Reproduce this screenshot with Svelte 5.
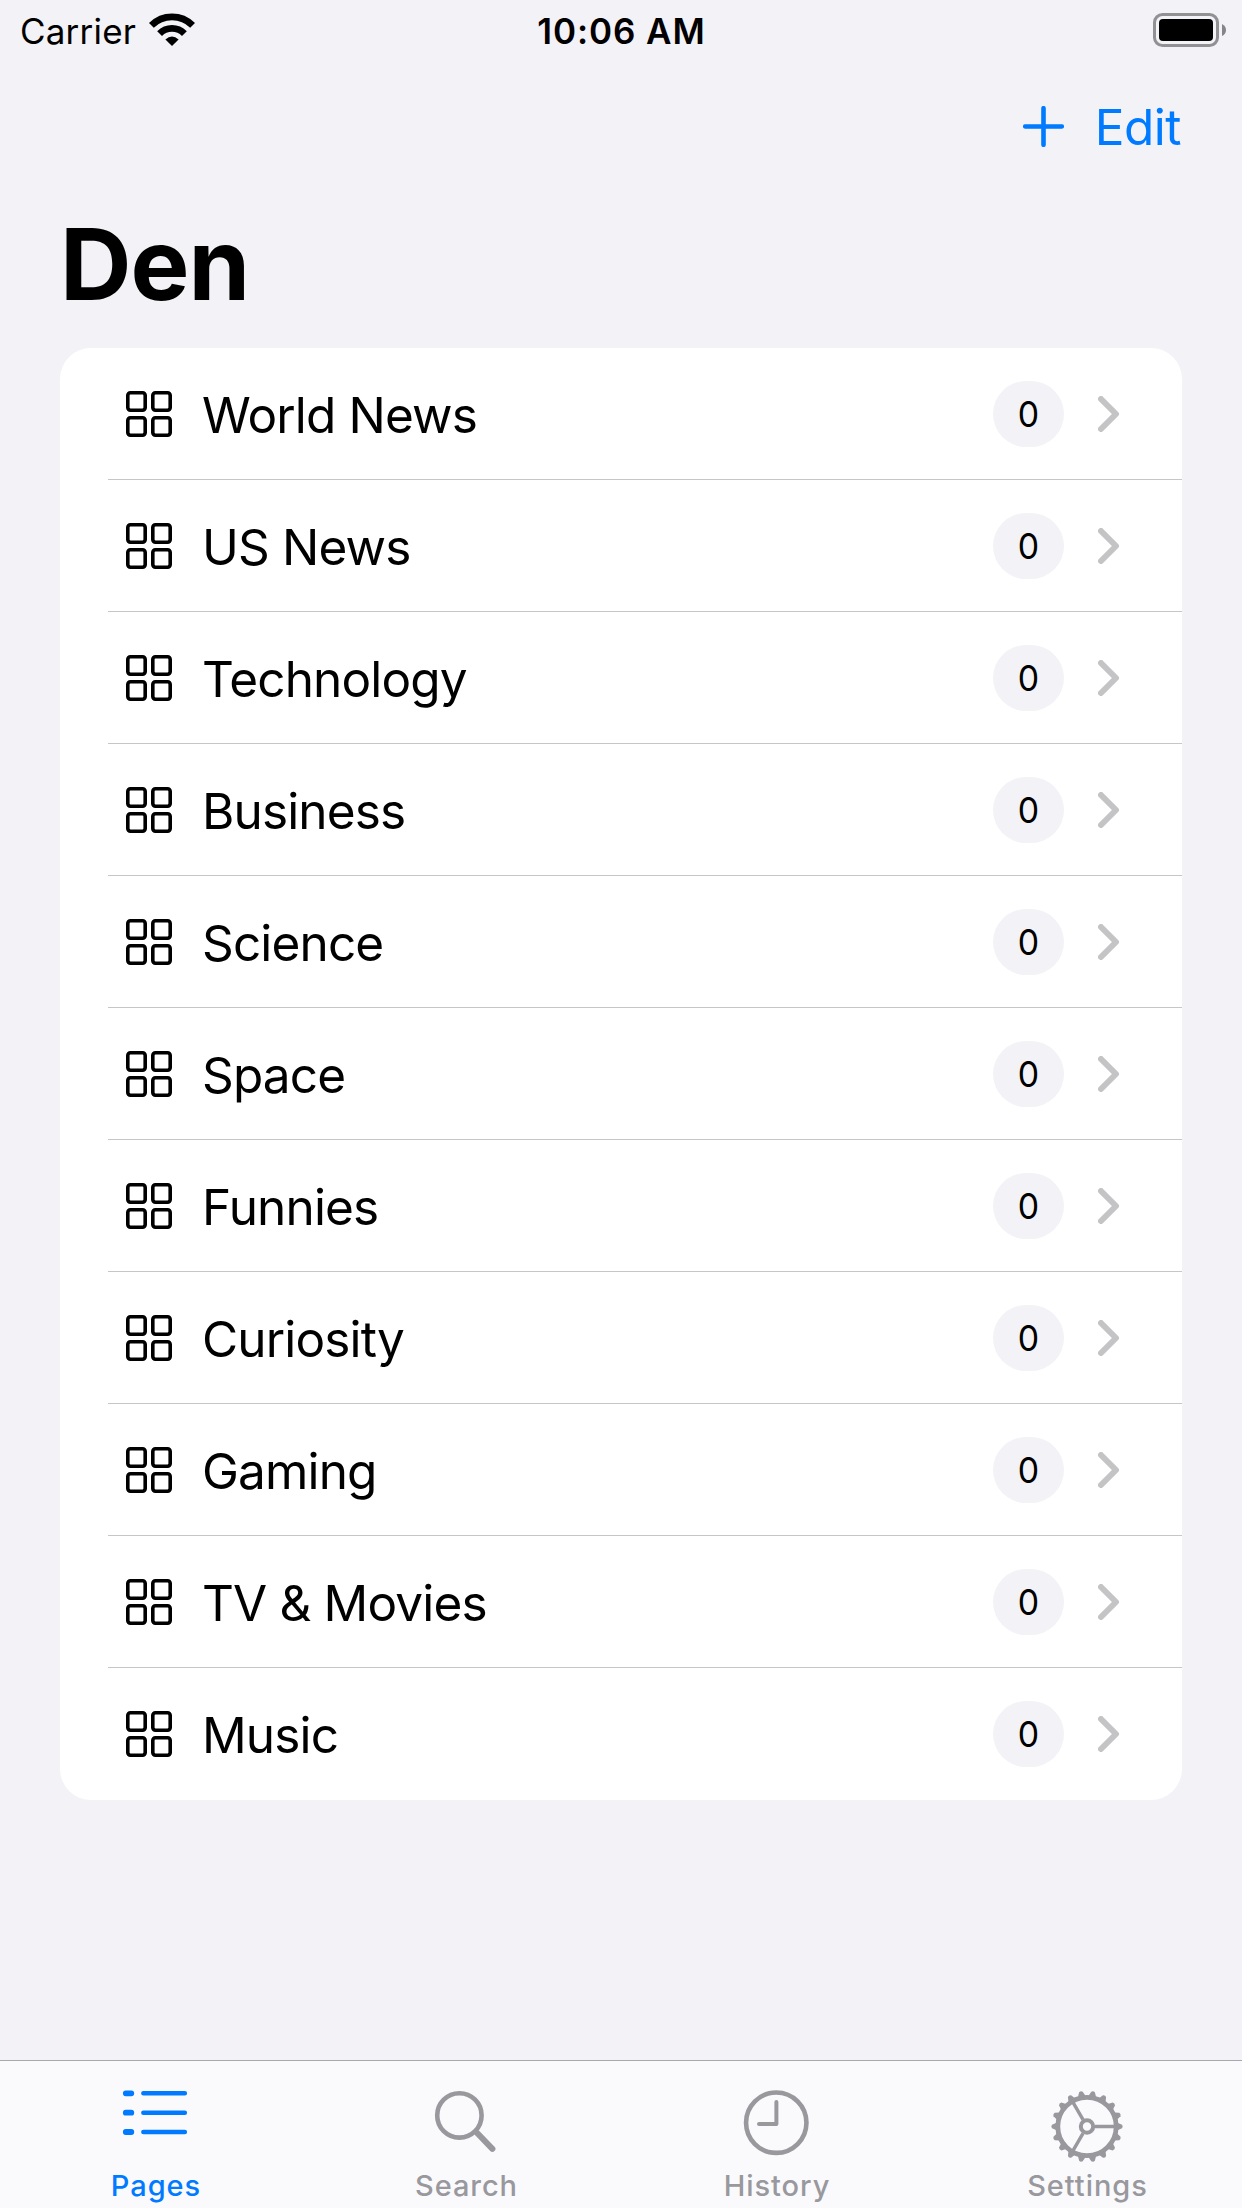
<script>
  const pages = [
    'World News', 'US News', 'Technology', 'Business', 'Science', 'Space',
    'Funnies', 'Curiosity', 'Gaming', 'TV & Movies', 'Music'
  ].map((name) => ({ name, unread: 0 }));

  const tabs = ['Pages', 'Search', 'History', 'Settings'];
  let active = $state('Pages');

  const teeth = Array.from({ length: 18 }, (_, i) => i * 20);
</script>

<div class="screen">
  <header class="status">
    <div class="carrier">
      <span>Carrier</span>
      <svg class="wifi" width="46" height="34" viewBox="-23 -33 46 34">
        <path d="M-20.6-20.6A29.2 29.2 0 0 1 20.6-20.6" class="arc" />
        <path d="M-12.4-12.4A17.5 17.5 0 0 1 12.4-12.4" class="arc" />
        <path d="M0 0L-6.6-6.6Q0-12.6 6.6-6.6Z" />
      </svg>
    </div>
    <div class="time">10:06 AM</div>
    <svg class="battery" width="74" height="34" viewBox="0 0 74 34">
      <rect x="1.5" y="1.5" width="63" height="31" rx="8" fill="none" stroke="#919194" stroke-width="3" />
      <rect x="6" y="6" width="54" height="22" rx="4" />
      <path d="M69 11Q73 13 73 17Q73 21 69 23Z" fill="#858588" />
    </svg>
  </header>

  <nav class="actions">
    <svg width="41" height="41" viewBox="0 0 41 41">
      <path d="M20.5 2.2V38.8M2.2 20.5H38.8" fill="none" stroke="#007aff" stroke-width="4.6" stroke-linecap="round" />
    </svg>
    <span class="edit">Edit</span>
  </nav>

  <h1>Den</h1>

  <ul class="list">
    {#each pages as page}
      <li>
        <svg class="grid" width="46" height="46" viewBox="0 0 46 46">
          <rect x="1.8" y="1.8" width="17.4" height="17.4" rx="2.6" />
          <rect x="26.8" y="1.8" width="17.4" height="17.4" rx="2.6" />
          <rect x="1.8" y="26.8" width="17.4" height="17.4" rx="2.6" />
          <rect x="26.8" y="26.8" width="17.4" height="17.4" rx="2.6" />
        </svg>
        <span class="name">{page.name}</span>
        <span class="badge"><span class="count">{page.unread}</span></span>
        <svg class="chevron" width="22" height="36" viewBox="0 0 22 36">
          <path d="M3 3L18 18L3 33" />
        </svg>
      </li>
    {/each}
  </ul>

  <footer class="tabs">
    {#each tabs as tab}
      <button class:active={tab === active} onclick={() => (active = tab)}>
        <svg width="80" height="94" viewBox="0 0 80 94">
          {#if tab === 'Pages'}
            <path d="M10.8 23.3H16.3M10.8 42.7H16.3M10.8 62H16.3" stroke-width="5.8" />
            <path d="M28.4 23.3H69.8M28.4 42.7H69.8M28.4 62H69.8" stroke-width="4.6" />
          {:else if tab === 'Search'}
            <circle cx="33.4" cy="45.4" r="22.2" stroke-width="4.6" />
            <path d="M50.2 62L66.4 78.9" stroke-width="6" />
          {:else if tab === 'History'}
            <circle cx="40.25" cy="52.7" r="30.2" stroke-width="4.6" />
            <path d="M40.4 32V54H23" stroke-width="4" />
          {:else}
            <g transform="translate(40 56.5)">
              <circle r="29.2" stroke-width="4.8" />
              <circle r="6.2" stroke-width="4" />
              {#each teeth as angle}
                <path class="tooth" transform="rotate({angle})" d="M30.5-3.8L35-1.8Q36.4 0 35 1.8L30.5 3.8Z" />
              {/each}
              <path d="M8 0H28M-4-6.9L-14-24.2M-4 6.9L-14 24.2" stroke-width="3.4" stroke-linecap="butt" />
            </g>
          {/if}
        </svg>
        <span class="label">{tab}</span>
      </button>
    {/each}
  </footer>
</div>

<style>
  :global(body) {
    margin: 0;
    background: #f2f2f7;
  }

  .screen {
    box-sizing: border-box;
    display: flex;
    flex-direction: column;
    width: 1242px;
    height: 2208px;
    background: #f2f2f7;
    color: #000;
    font-family: Inter, 'Liberation Sans', sans-serif;
    font-size: 49.5px;
    overflow: hidden;
  }

  svg {
    display: block;
    flex: none;
  }

  .status {
    display: grid;
    grid-template-columns: 1fr auto 1fr;
    align-items: center;
    height: 60px;
    padding: 0 15px 0 20px;
    font-size: 35px;
    line-height: 58px;
  }

  .carrier {
    display: flex;
    align-items: center;
    gap: 12.5px;
    letter-spacing: 0.2px;
    padding-top: 2px;
  }

  .wifi {
    margin-top: -3px;
  }

  .arc {
    fill: none;
    stroke: #000;
    stroke-width: 6.8;
  }

  .time {
    font-weight: 600;
    letter-spacing: 0.9px;
    padding: 2px 4px 0 0;
  }

  .battery {
    justify-self: end;
  }

  .actions {
    display: flex;
    justify-content: flex-end;
    align-items: center;
    gap: 31px;
    height: 132px;
    padding-right: 61px;
    color: #007aff;
  }

  .edit {
    letter-spacing: -0.5px;
    line-height: 60px;
    padding-top: 2px;
  }

  h1 {
    margin: 0;
    height: 156px;
    padding-left: 60px;
    font-size: 99px;
    font-weight: 700;
    line-height: 145px;
    letter-spacing: -1px;
  }

  .list {
    margin: 0 60px;
    padding: 0;
    list-style: none;
    background: #fff;
    border-radius: 31px;
    overflow: hidden;
  }

  li {
    box-sizing: border-box;
    display: flex;
    align-items: center;
    height: 132px;
    margin-left: 48px;
    padding: 0 62px 0 18px;
    border-bottom: 1px solid #c6c6c8;
  }

  li:last-child {
    border-bottom-color: transparent;
  }

  .grid {
    fill: none;
    stroke: #000;
    stroke-width: 3.6;
  }

  .name {
    flex: 1;
    margin-left: 30px;
    line-height: 60px;
    letter-spacing: -0.85px;
    padding-top: 2px;
  }

  .badge {
    width: 71px;
    height: 66px;
    border-radius: 33px;
    background: #f2f2f7;
    font-size: 36px;
    line-height: 66px;
    text-align: center;
  }

  .count {
    display: inline-block;
    transform: scaleX(0.94);
  }

  .chevron {
    margin-left: 34px;
    fill: none;
    stroke: #c4c4c6;
    stroke-width: 6;
    stroke-linecap: round;
    stroke-linejoin: round;
  }

  .tabs {
    display: grid;
    grid-template-columns: repeat(4, 1fr);
    box-sizing: border-box;
    height: 148px;
    margin-top: auto;
    border-top: 1px solid #a9a8ad;
    background: #fafafd;
  }

  button {
    display: flex;
    flex-direction: column;
    align-items: center;
    margin: 0;
    padding: 9px 0 0;
    border: 0;
    background: none;
    color: #98989d;
    font: 500 29px/44px Inter, 'Liberation Sans', sans-serif;
    letter-spacing: 0.95px;
  }

  button.active {
    color: #007aff;
  }

  button svg {
    fill: none;
    stroke: currentColor;
    stroke-linecap: round;
    stroke-linejoin: round;
  }

  .label {
    padding-left: 1.5px;
  }

  .tooth {
    fill: currentColor;
    stroke: none;
  }
</style>
